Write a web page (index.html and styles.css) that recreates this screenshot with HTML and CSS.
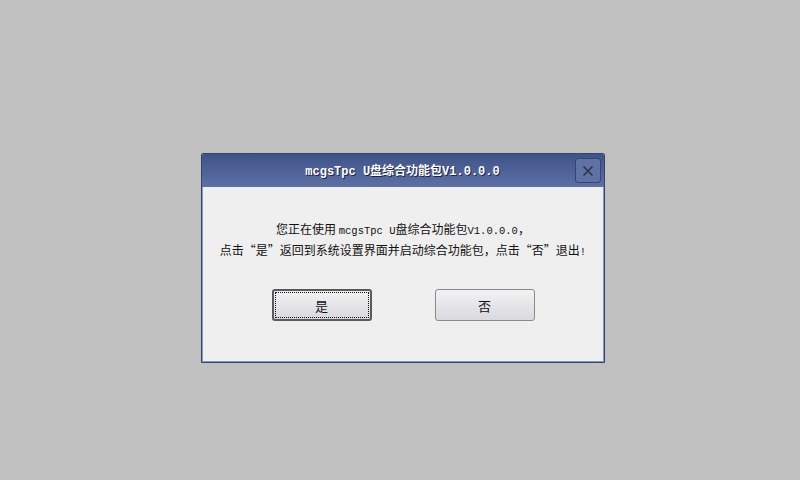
FILE: index.html
```html
<!DOCTYPE html>
<html>
<head>
<meta charset="utf-8">
<link rel="stylesheet" href="styles.css">
</head>
<body>
<div class="dialog">
  <div class="titlebar">
    <div class="title"><span class="en">mcgsTpc U</span>盘综合功能包<span class="en">V1.0.0.0</span></div>
    <div class="close">
      <svg width="12" height="12" viewBox="0 0 12 12"><path d="M1.5 1.5 L10.5 10.5 M10.5 1.5 L1.5 10.5" stroke="#2c3447" stroke-width="1.6" fill="none"/></svg>
    </div>
  </div>
  <div class="content">
    <div class="msg">
      <div class="line">您正在使用 <span class="en">mcgsTpc U</span>盘综合功能包<span class="en">V1.0.0.0</span>，</div>
      <div class="line">点击“是”返回到系统设置界面并启动综合功能包，点击“否”退出<span class="en">!</span></div>
    </div>
    <div class="buttons">
      <div class="btn focused"><span class="focus">是</span></div>
      <div class="btn"><span class="focus plain">否</span></div>
    </div>
  </div>
</div>
</body>
</html>
```
FILE: styles.css
```css
html, body {
  margin: 0;
  padding: 0;
}
body {
  width: 800px;
  height: 480px;
  background: #c0c0c0;
  font-family: "Noto Sans CJK SC", sans-serif;
  box-sizing: border-box;
  padding: 153px 0 0 201px;
}
.dialog {
  width: 404px;
  height: 210px;
  box-sizing: border-box;
  border: 1px solid #34446a;
  box-shadow: inset 0 0 0 1px #8199bb;
  background: #efefef;
  display: flex;
  flex-direction: column;
  border-radius: 2px 2px 0 0;
}
.titlebar {
  height: 33px;
  background: linear-gradient(#3e5388, #5e70a5);
  display: flex;
  align-items: center;
  justify-content: center;
  position: relative;
  border-radius: 2px 2px 0 0;
}
.title {
  color: #fff;
  font-weight: bold;
  font-size: 12px;
  line-height: 16px;
  text-shadow: 1px 1px 0 #1c2440;
  margin-right: 1px;
}
.en {
  font-family: "Liberation Mono", monospace;
  font-size: 10.5px;
}
.title .en {
  font-size: 12px;
}
.close {
  position: absolute;
  right: 3px;
  top: 4px;
  width: 24px;
  height: 23px;
  border: 1px solid #34456f;
  border-radius: 3px;
  background: #6071a3;
  display: flex;
  align-items: center;
  justify-content: center;
}
.content {
  flex: 1;
  display: flex;
  flex-direction: column;
  align-items: center;
  padding-top: 31px;
}
.msg {
  color: #111;
  font-size: 12px;
  line-height: 21px;
  text-align: center;
}
.line {
  height: 21px;
  white-space: nowrap;
}
.line .en {
  line-height: 12px;
}
.buttons {
  display: flex;
  gap: 63px;
  margin-top: 29px;
}
.btn {
  box-sizing: content-box;
  width: 94px;
  height: 26px;
  padding: 2px;
  border: 1px solid #8a8a8a;
  border-radius: 3px;
  background: linear-gradient(#f3f3f5, #d9d9de);
  display: flex;
  font-size: 13px;
  color: #111;
}
.btn.focused {
  border: 2px solid #5a5a5a;
  padding: 1px;
}
.focus {
  flex: 1;
  display: flex;
  align-items: center;
  justify-content: center;
  border: 1px dotted #111;
}
.focus.plain {
  border-color: transparent;
}
```
